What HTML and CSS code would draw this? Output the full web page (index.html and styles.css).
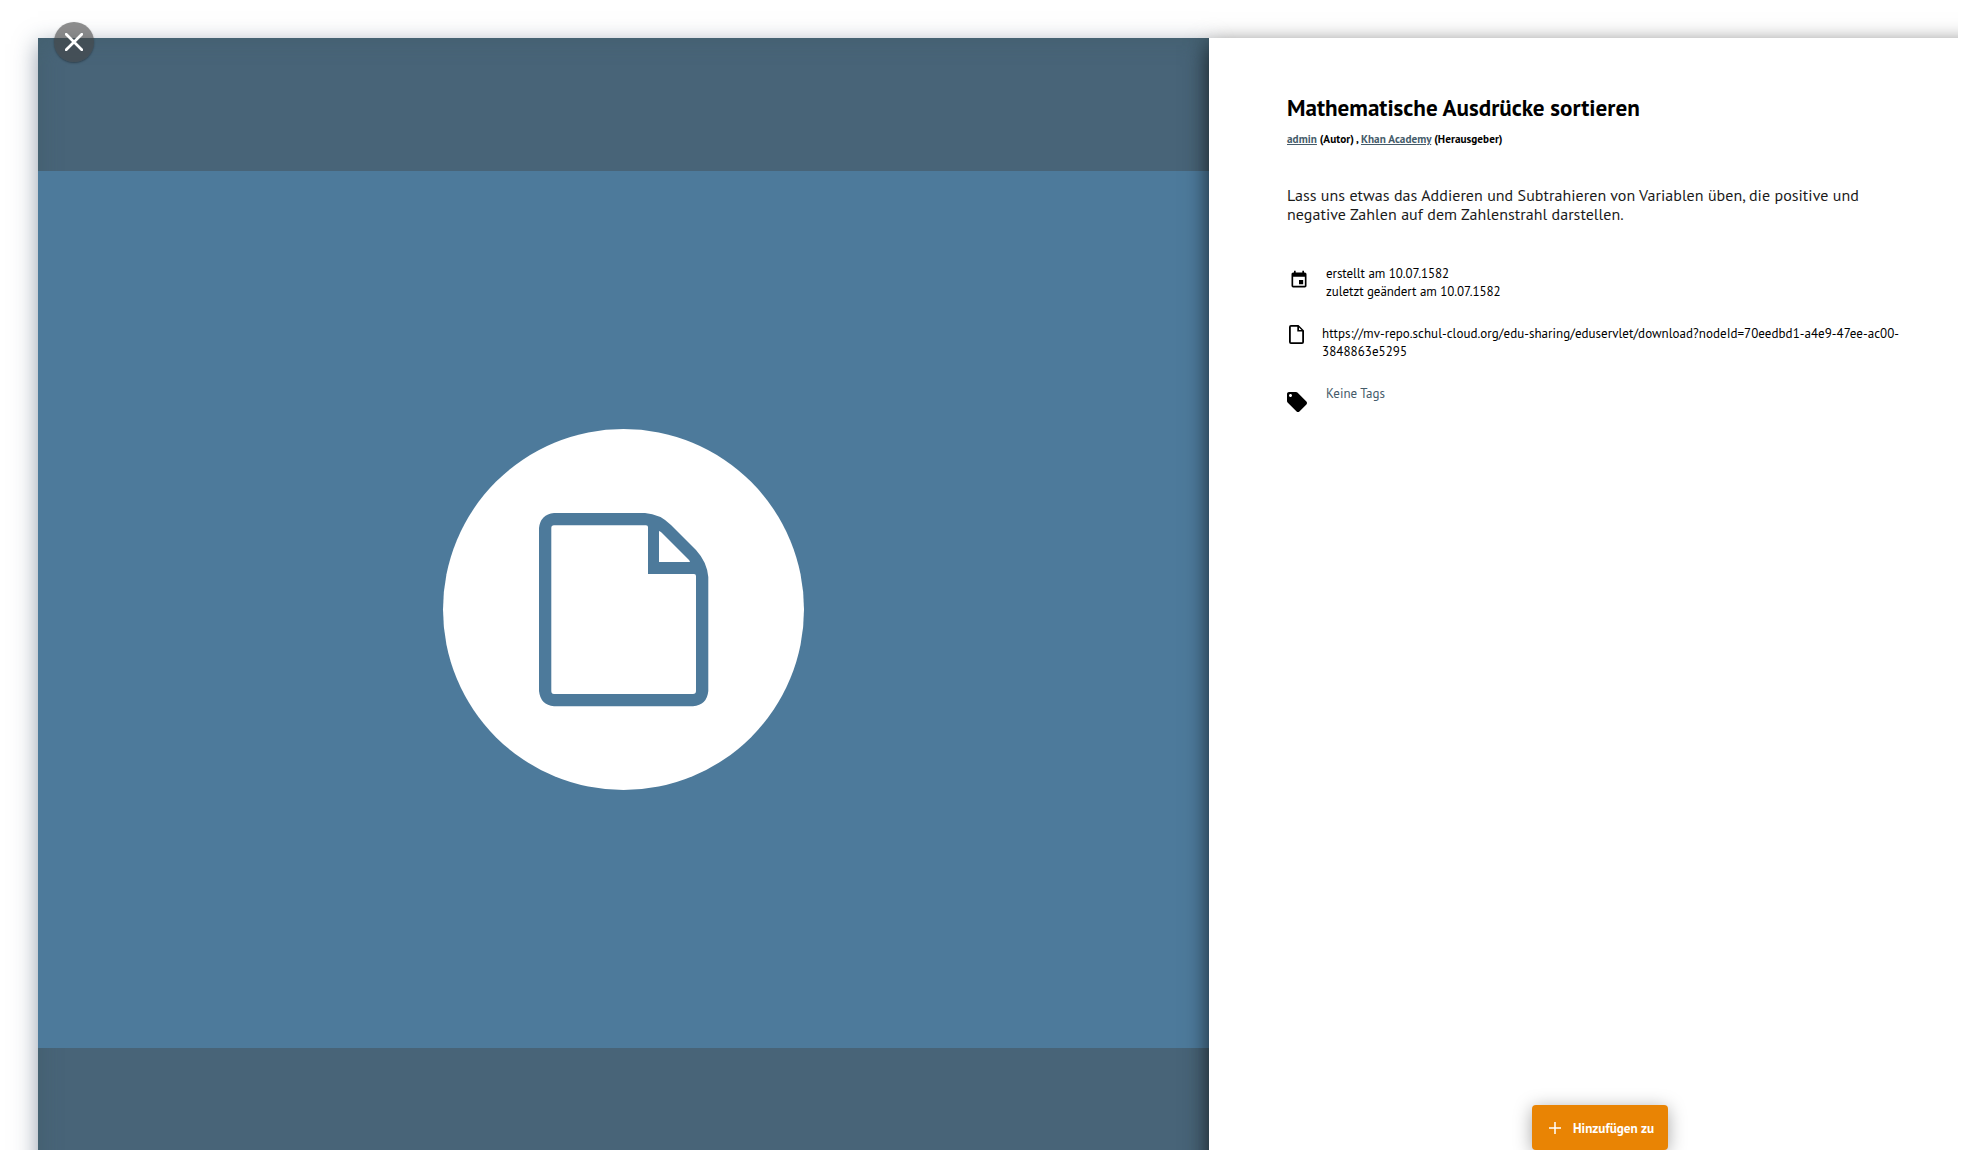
FILE: index.html
```html
<!DOCTYPE html>
<html lang="de">
<head>
<meta charset="utf-8">
<title>Mathematische Ausdrücke sortieren</title>
<link rel="stylesheet" href="styles.css">
</head>
<body>
<div class="page">
  <main class="resource">
    <section class="preview">
      <div class="cover">
        <div class="disc">
          <svg width="170" height="194" viewBox="0 0 170 194"><path fill="#4d7a9b" fill-rule="evenodd" d="M15 0H106Q121 1 132 12L157 37Q168 49 169.300 64V178Q168 192 154 193.300H15Q1.500 192 0 178V15Q1.500 1.500 15 0ZM15 12.300Q12.300 12.300 12.300 15V178Q12.300 181 15 181H154Q157 181 157 178V63Q157 61 155 61H109V14Q109 12.300 107 12.300ZM120 18V49H151Q150.500 47 149 46L122.500 19.500Q121 18 120 18Z"/></svg>
        </div>
      </div>
    </section>
    <section class="details">
      <h1 class="title">Mathematische Ausdrücke sortieren</h1>
      <div class="authors"><a href="#">admin</a> (Autor) , <a href="#">Khan Academy</a> (Herausgeber)</div>
      <p class="description">Lass uns etwas das Addieren und Subtrahieren von Variablen üben, die positive und<br>negative Zahlen auf dem Zahlenstrahl darstellen.</p>
      <div class="meta dates">
        <svg class="icon" width="20" height="20" viewBox="0 0 24 24"><path d="M17 12h-5v5h5v-5zM16 1v2H8V1H6v2H5c-1.110 0-1.990.9-1.990 2L3 19a2 2 0 0 0 2 2h14c1.100 0 2-.9 2-2V5c0-1.100-.9-2-2-2h-1V1h-2zm3 18H5V8h14v11z"/></svg>
        <div>erstellt am 10.07.1582<br>zuletzt geändert am 10.07.1582</div>
      </div>
      <div class="meta link">
        <svg class="icon" width="15" height="19" viewBox="0 0 15 19"><path fill-rule="evenodd" d="M2 0H9.500L15 5.500V17Q15 19 13 19H2Q0 19 0 17V2Q0 0 2 0ZM1.800 1.800V17.200H13.200V6.500H8.300V1.800ZM10 2.500V5H12.500Z"/></svg>
        <div>https://mv-repo.schul-cloud.org/edu-sharing/eduservlet/download?nodeId=70eedbd1-a4e9-47ee-ac00-<br>3848863e5295</div>
      </div>
      <div class="meta tags">
        <svg class="icon" width="20" height="20" viewBox="2 2 20 20"><path d="M21.410 11.580l-9-9C12.050 2.220 11.550 2 11 2H4c-1.100 0-2 .9-2 2v7c0 .550.220 1.050.590 1.420l9 9c.360.360.860.580 1.410.580s1.050-.220 1.410-.590l7-7c.370-.360.590-.860.590-1.410s-.230-1.060-.590-1.420zM5.500 7C4.670 7 4 6.330 4 5.500S4.670 4 5.500 4 7 4.670 7 5.500 6.330 7 5.500 7z"/></svg>
        <div>Keine Tags</div>
      </div>
      <button class="add" type="button">
        <svg width="12" height="12" viewBox="0 0 12 12"><path d="M6 0V12M0 6H12" stroke="#fff" stroke-width="1.500"/></svg>
        <span>Hinzufügen zu</span>
      </button>
    </section>
  </main>
  <button class="close" type="button" aria-label="Schließen">
    <svg width="18" height="18" viewBox="0 0 18 18"><path d="M1.200 1.200L16.800 16.800M16.800 1.200L1.200 16.800" stroke="#fff" stroke-width="2.700" stroke-linecap="round"/></svg>
  </button>
</div>
</body>
</html>
```
FILE: styles.css
```css
* { box-sizing: border-box; }
body { margin: 0; background: #fff; color: #000; font-family: "PT Sans", "Noto Sans", sans-serif; }
svg { display: block; flex: none; }
.page { position: relative; width: 1958px; height: 1150px; padding: 38px 0 0 38px; overflow: hidden; }
.resource { display: flex; height: 1200px; }
.preview { flex: none; width: 1171px; padding-top: 133px; background: #486478; box-shadow: 0 6px 22px rgba(40, 60, 90, .5), inset 0 0 24px rgba(60, 90, 95, .4); }
.cover { display: flex; align-items: center; justify-content: center; height: 877px; background: #4d7a9b; }
.disc { display: flex; align-items: center; justify-content: center; width: 361.500px; height: 361.500px; border-radius: 50%; background: #fff; }
.details { flex: none; display: flex; flex-direction: column; width: 800px; padding: 52px 0 0 78px; background: #fff; box-shadow: 0 7px 22px rgba(0, 0, 0, .7); }
.title { margin: 0; font-size: 23.100px; line-height: 34px; white-space: nowrap; }
.authors { margin-top: 6px; font-size: 11.200px; line-height: 18px; font-weight: 700; letter-spacing: .05px; white-space: nowrap; }
.authors a { color: #455b6a; }
.description { margin: 38px 0 0; font-size: 16px; line-height: 19px; letter-spacing: .045px; white-space: nowrap; color: #1b1b1b; }
.meta { display: flex; font-size: 13px; line-height: 18px; white-space: nowrap; }
.dates { gap: 17px; margin: 41px 0 0 2px; letter-spacing: -.05px; }
.dates .icon { margin-top: 5px; }
.link { gap: 18px; margin: 24px 0 0 2px; letter-spacing: .04px; }
.link .icon { margin-top: 0; }
.tags { gap: 19px; margin-top: 24px; color: #455b6a; }
.tags .icon { margin-top: 7px; fill: #000; }
.add { display: flex; align-items: center; gap: 12px; width: 136px; height: 45px; margin: 693px 0 0 245px; padding: 1px 0 0 17px; border: 0; border-radius: 4px; background: #e98404; box-shadow: 0 3px 18px rgba(0, 0, 0, .35); color: #fff; font: 700 13.200px "PT Sans", "Noto Sans", sans-serif; white-space: nowrap; }
.close { position: absolute; left: 54px; top: 22px; display: flex; align-items: center; justify-content: center; width: 40px; height: 40px; padding: 0; border: 0; border-radius: 50%; background: rgba(66, 66, 66, .6); box-shadow: 0 1px 2px rgba(0, 0, 0, .35); }
```
